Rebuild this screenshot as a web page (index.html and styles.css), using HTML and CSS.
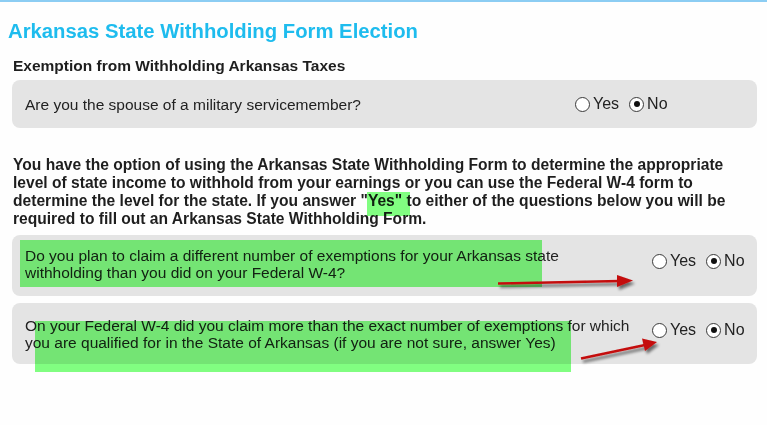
FILE: index.html
```html
<!DOCTYPE html>
<html>
<head>
<meta charset="utf-8">
<link rel="stylesheet" href="styles.css">
</head>
<body>
<div class="page">
  <h1 class="title">Arkansas State Withholding Form Election</h1>
  <h2 class="subtitle">Exemption from Withholding Arkansas Taxes</h2>
  <div class="box box-one">
    <div class="question">Are you the spouse of a military servicemember?</div>
    <div class="choices">
      <span class="radio"></span><span class="label">Yes</span>
      <span class="radio checked"></span><span class="label">No</span>
    </div>
  </div>
  <p class="intro">You have the option of using the Arkansas State Withholding Form to determine the appropriate<br>level of state income to withhold from your earnings or you can use the Federal W-4 form to<br>determine the level for the state. If you answer "Yes" to either of the questions below you will be<br>required to fill out an Arkansas State Withholding Form.</p>
  <div class="box box-two">
    <div class="question">Do you plan to claim a different number of exemptions for your Arkansas state<br>withholding than you did on your Federal W-4?</div>
    <div class="choices">
      <span class="radio"></span><span class="label">Yes</span>
      <span class="radio checked"></span><span class="label">No</span>
    </div>
  </div>
  <div class="box box-three">
    <div class="question">On your Federal W-4 did you claim more than the exact number of exemptions for which<br>you are qualified for in the State of Arkansas (if you are not sure, answer Yes)</div>
    <div class="choices">
      <span class="radio"></span><span class="label">Yes</span>
      <span class="radio checked"></span><span class="label">No</span>
    </div>
  </div>
</div>
<div class="hl hl-yes"></div>
<div class="hl hl-q2"></div>
<div class="hl hl-q3"></div>
<svg class="arrows" width="767" height="425" viewBox="0 0 767 425">
  <defs>
    <filter id="sh" x="-20%" y="-50%" width="140%" height="200%">
      <feGaussianBlur in="SourceAlpha" stdDeviation="1.5"/>
      <feOffset dx="2" dy="3" result="b"/>
      <feComponentTransfer><feFuncA type="linear" slope="0.55"/></feComponentTransfer>
      <feMerge><feMergeNode/><feMergeNode in="SourceGraphic"/></feMerge>
    </filter>
  </defs>
  <g filter="url(#sh)" fill="#c40d0d" stroke="#c40d0d">
    <line x1="498" y1="283.5" x2="620" y2="281" stroke-width="2.6"/>
    <polygon points="617,275 633,280.5 617,287" stroke="none"/>
    <line x1="581" y1="358.5" x2="645" y2="345" stroke-width="2.6"/>
    <polygon points="642,338.5 657,342 645,351" stroke="none"/>
  </g>
</svg>
</body>
</html>
```

FILE: styles.css
```css
html, body {
  margin: 0;
  padding: 0;
  background: #fefefe;
}
body {
  width: 767px;
  height: 425px;
  overflow: hidden;
  position: relative;
  border-top: 2px solid #8ccdf3;
  box-sizing: border-box;
  font-family: "Liberation Sans", Arial, sans-serif;
  color: #222;
}
.page {
  padding: 0 10px 0 12px;
  display: flex;
  flex-direction: column;
}
.title {
  margin: 16px 0 0 -4px;
  font-size: 20.3px;
  line-height: 26px;
  font-weight: bold;
  color: #1ebcee;
}
.subtitle {
  margin: 13px 0 0 1px;
  font-size: 15.5px;
  line-height: 18px;
  font-weight: bold;
  color: #1e1e1e;
}
.box {
  background: #e4e4e4;
  border-radius: 8px;
  display: flex;
  align-items: flex-start;
  padding: 0 0 0 13px;
}
.box-one {
  margin-top: 5px;
  height: 48px;
  align-items: center;
}
.box-one .question { width: 550px; }
.box-two {
  margin-top: 7px;
  height: 61px;
  padding-top: 12px;
  box-sizing: border-box;
}
.box-three {
  margin-top: 7px;
  height: 61px;
  padding-top: 14px;
  box-sizing: border-box;
}
.box-two .question, .box-three .question { width: 627px; white-space: nowrap; }
.box-two .choices { margin-top: 5px; }
.box-three .choices { margin-top: 4px; }
.question {
  font-size: 15.5px;
  line-height: 17px;
  color: #222;
}
.choices {
  display: flex;
  align-items: center;
  font-size: 16px;
  color: #222;
}
.radio {
  width: 15px;
  height: 15px;
  border: 1px solid #3a3a3a;
  border-radius: 50%;
  background: #fff;
  box-sizing: border-box;
  position: relative;
  margin-right: 3px;
}
.radio.checked::after {
  content: "";
  position: absolute;
  left: 3.5px;
  top: 3.5px;
  width: 6px;
  height: 6px;
  border-radius: 50%;
  background: #111;
}
.label { margin-right: 10px; }
.intro {
  margin: 28px 0 0 1px;
  font-size: 15.6px;
  line-height: 18px;
  font-weight: bold;
  color: #1e1e1e;
  white-space: nowrap;
}
.hl {
  position: absolute;
  background: #82ff82;
  mix-blend-mode: multiply;
}
.hl-yes { left: 367px; top: 190px; width: 43px; height: 24px; }
.hl-q2 { left: 20px; top: 238px; width: 522px; height: 47px; }
.hl-q3 { left: 35px; top: 319px; width: 536px; height: 51px; }
.arrows {
  position: absolute;
  left: 0;
  top: -2px;
}
```
